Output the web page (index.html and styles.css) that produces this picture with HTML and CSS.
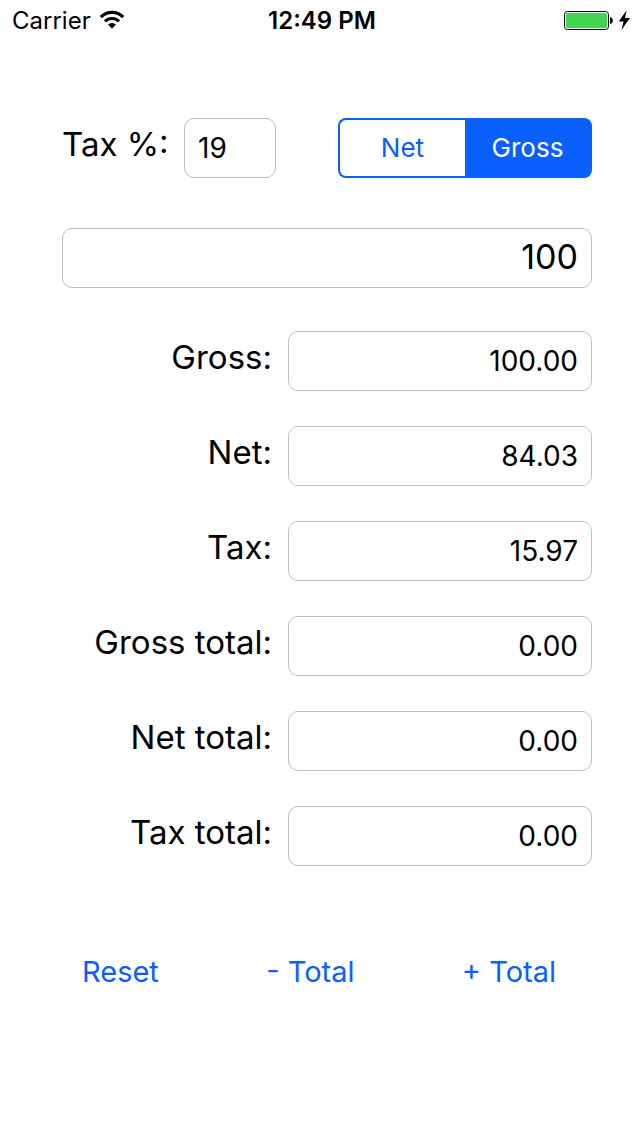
FILE: index.html
```
<!DOCTYPE html>
<html lang="en">
<head>
    <meta charset="UTF-8">
    <meta name="viewport" content="width=device-width, initial-scale=1.0">
    <title>Tax Calculator</title>
    <link rel="stylesheet" href="styles.css">
</head>
<body>
    <header class="status-bar">
        <div class="carrier">
            <span>Carrier</span>
            <svg width="26" height="20" viewBox="0 0 26 20" aria-hidden="true">
                <path d="M1.9 7.1 A15.5 15.5 0 0 1 24.1 7.1" fill="none" stroke="#000" stroke-width="3.2"/>
                <path d="M6 11.4 A10 10 0 0 1 20 11.4" fill="none" stroke="#000" stroke-width="3"/>
                <path d="M9 14.6 A5.8 5.8 0 0 1 17 14.6 L13 18.8 Z"/>
            </svg>
        </div>
        <div class="clock">12:49 PM</div>
        <div class="power">
            <svg width="68" height="24" viewBox="0 0 68 24" aria-hidden="true">
                <rect x="0.5" y="3.5" width="44" height="18" rx="3" fill="#fff" stroke="#000"/>
                <rect x="2" y="5" width="41" height="15" rx="1.5" fill="#43d551"/>
                <path d="M46 9 C49.8 9.6 49.8 15.4 46 16 Z"/>
                <path d="M62.6 2.2 L54.8 13.6 H59.6 L57.4 22 L66 10 H61 Z"/>
            </svg>
        </div>
    </header>

    <main class="container">
        <div class="options">
            <label for="taxRate">Tax %:</label>
            <input type="text" id="taxRate" class="field rate" value="19">
            <div class="segments" role="radiogroup" aria-label="Amount type">
                <input type="radio" name="mode" id="modeNet" value="net">
                <label for="modeNet">Net</label>
                <input type="radio" name="mode" id="modeGross" value="gross" checked>
                <label for="modeGross">Gross</label>
            </div>
        </div>

        <input type="text" id="amount" class="field amount" value="100" aria-label="Amount">

        <div class="results">
            <label for="gross">Gross:</label>
            <input type="text" id="gross" class="field" value="100.00" readonly>
            <label for="net">Net:</label>
            <input type="text" id="net" class="field" value="84.03" readonly>
            <label for="tax">Tax:</label>
            <input type="text" id="tax" class="field" value="15.97" readonly>
            <label for="grossTotal">Gross total:</label>
            <input type="text" id="grossTotal" class="field" value="0.00" readonly>
            <label for="netTotal">Net total:</label>
            <input type="text" id="netTotal" class="field" value="0.00" readonly>
            <label for="taxTotal">Tax total:</label>
            <input type="text" id="taxTotal" class="field" value="0.00" readonly>
        </div>

        <div class="actions">
            <button type="button">Reset</button>
            <button type="button">- Total</button>
            <button type="button">+ Total</button>
        </div>
    </main>
</body>
</html>
```
FILE: styles.css
```
* {
    box-sizing: border-box;
}
body {
    margin: 0;
    background-color: #fff;
    color: #000;
    font-family: Inter, "Liberation Sans", sans-serif;
}
.status-bar {
    display: grid;
    grid-template-columns: 1fr auto 1fr;
    align-items: center;
    height: 40px;
    padding: 0 8px 0 12px;
    font-size: 24px;
}
.carrier {
    display: flex;
    align-items: center;
    gap: 8px;
}
.clock {
    font-weight: 600;
}
.power {
    display: flex;
    justify-content: flex-end;
}
.container {
    padding: 78px 48px 40px 62px;
}
.options {
    display: flex;
    align-items: center;
}
.options > label,
.results label {
    padding-bottom: 8px;
    font-size: 33px;
    line-height: 40px;
    white-space: nowrap;
}
.options > label {
    width: 122px;
}
.field {
    width: 100%;
    height: 60px;
    padding: 0 13px;
    border: 1px solid #c0c0c0;
    border-radius: 10px;
    background-color: #fff;
    color: #000;
    font-family: inherit;
    font-size: 28px;
    text-align: right;
}
.rate {
    width: 92px;
    text-align: left;
}
.segments {
    display: flex;
    width: 254px;
    height: 60px;
    margin-left: auto;
}
.segments input {
    appearance: none;
    width: 0;
    margin: 0;
}
.segments label {
    flex: 1;
    border: 2px solid #0a60ff;
    color: #0a60ff;
    font-size: 26px;
    line-height: 56px;
    text-align: center;
    cursor: pointer;
}
.segments label:first-of-type {
    border-right: none;
    border-radius: 8px 0 0 8px;
}
.segments label:last-of-type {
    border-left: none;
    border-radius: 0 8px 8px 0;
}
.segments input:checked + label {
    background-color: #0a60ff;
    color: #fff;
}
.amount {
    display: block;
    margin-top: 50px;
    padding-bottom: 4px;
    font-size: 34px;
}
.results {
    display: grid;
    grid-template-columns: 210px 1fr;
    gap: 35px 16px;
    align-items: center;
    margin-top: 43px;
}
.results label {
    text-align: right;
}
.actions {
    display: flex;
    justify-content: space-between;
    margin-top: 86px;
    padding: 0 36px 0 20px;
}
.actions button {
    padding: 0;
    border: none;
    background: none;
    color: #0a60ff;
    font-family: inherit;
    font-size: 29px;
    line-height: 40px;
    cursor: pointer;
}
```
